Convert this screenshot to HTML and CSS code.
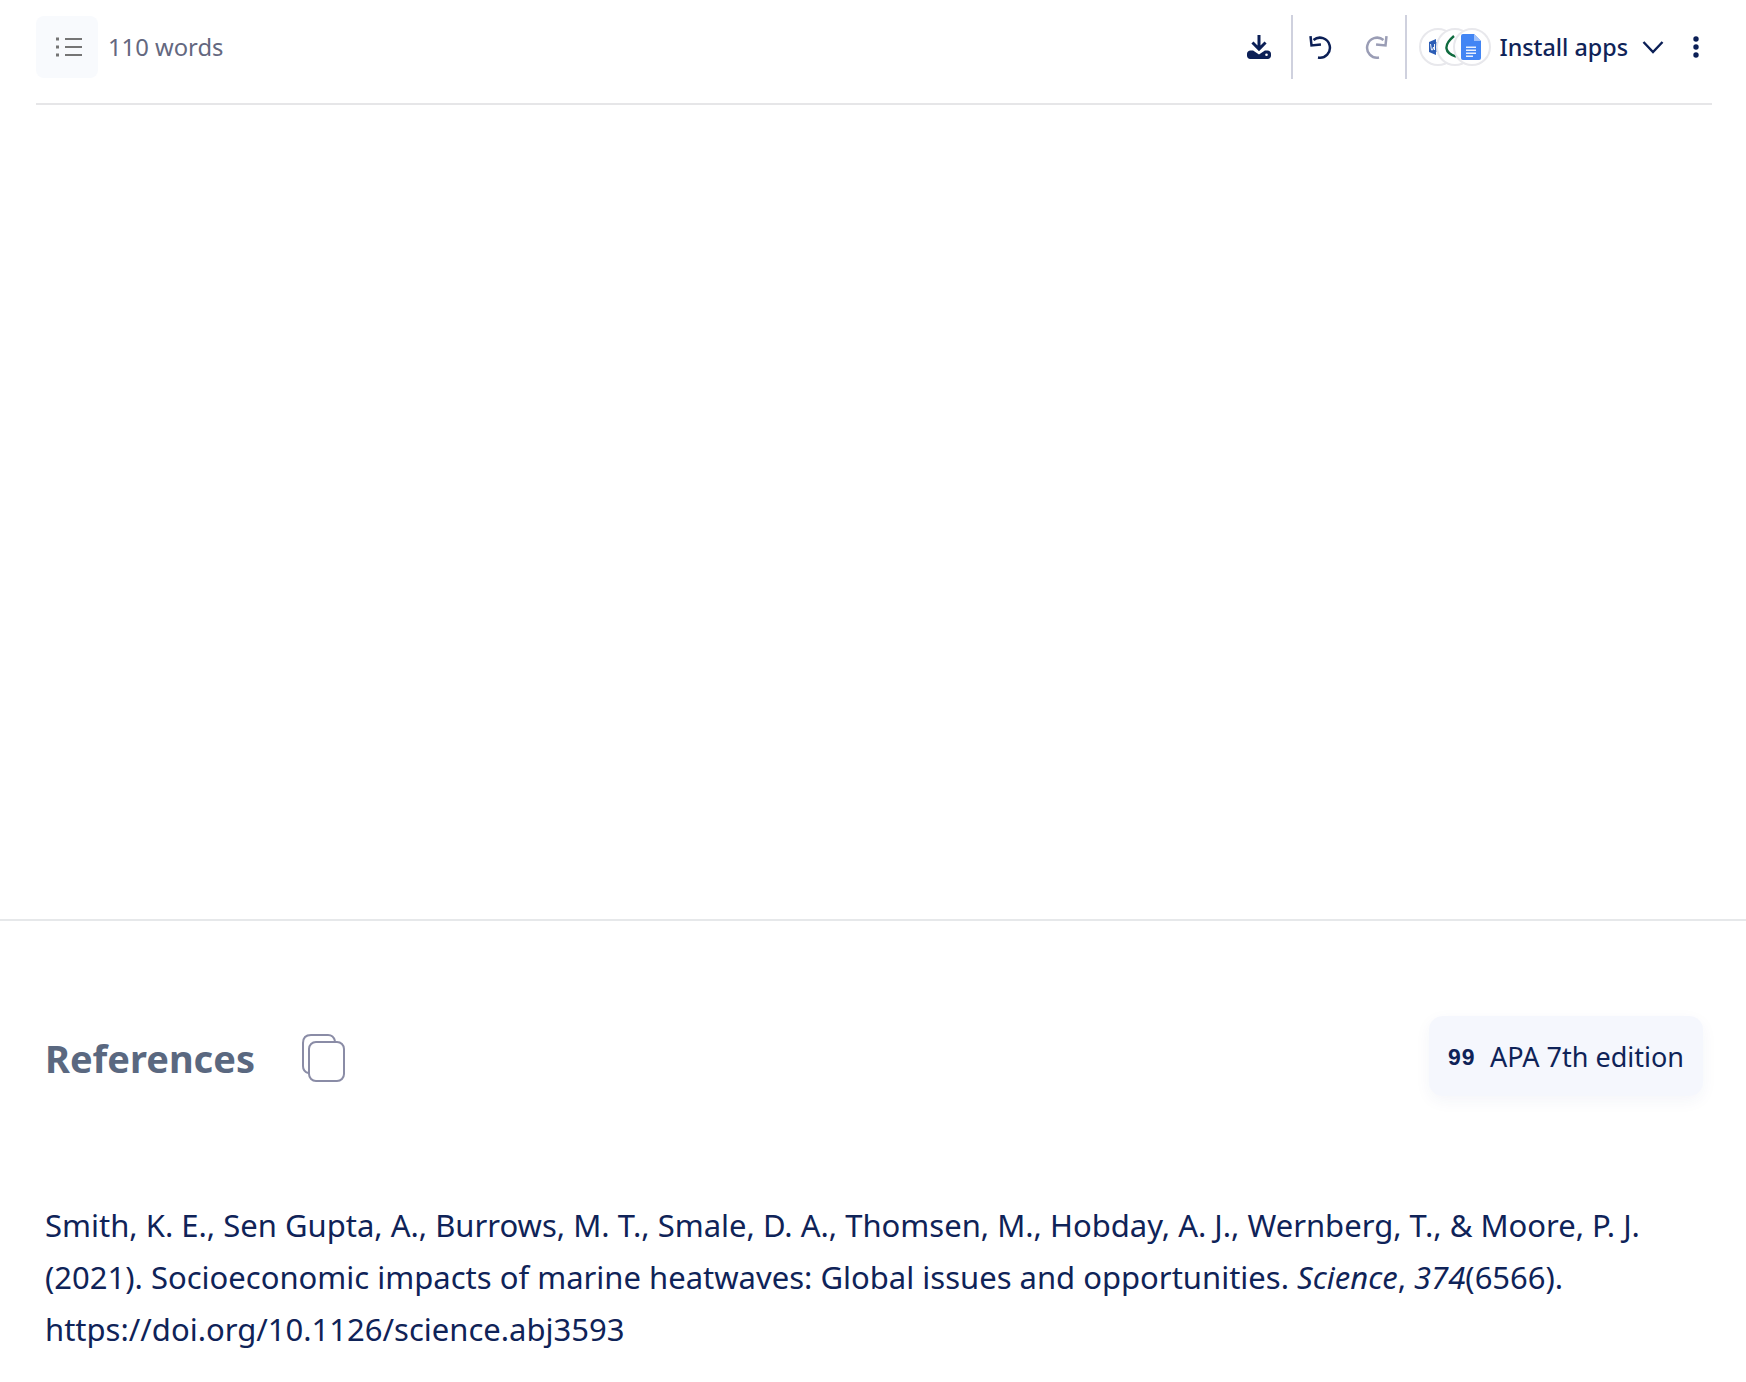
FILE: index.html
```html
<!DOCTYPE html>
<html lang="en">
<head>
<meta charset="utf-8">
<title>References</title>
<link rel="stylesheet" href="styles.css">
</head>
<body>
<div class="editor">
  <header class="toolbar">
    <button class="outline-btn" aria-label="Outline">
      <svg width="26" height="20" viewBox="0 0 26 20" fill="none" stroke="#757575" stroke-width="2.200"><path d="M9 2h17M9 10h17M9 18h17"/><path d="M0 2h3M0 10h3M0 18h3" stroke-width="3"/></svg>
    </button>
    <span class="count">110 words</span>
    <div class="spacer"></div>
    <div class="tool tool-download">
      <svg width="24" height="24" viewBox="0 0 24 24" fill="#0b1f56"><path d="M10.500 0h3v10.500l4-4 2.100 2.100-7.600 7.600-7.600-7.600 2.100-2.100 4 4z"/><path d="M3.500 15.500h2.600l5.900 4 5.900-4h2.600c2 0 3.500 1.500 3.500 3.200v2.100c0 1.800-1.500 3.200-3.200 3.200H3.200C1.500 24 0 22.600 0 20.800v-2.100c0-1.700 1.500-3.200 3.500-3.200z"/><circle cx="19.500" cy="19.800" r="1.300" fill="#fff"/></svg>
    </div>
    <div class="sep"></div>
    <div class="tool tool-undo">
      <svg width="24" height="24" viewBox="0 0 24 24" fill="none" stroke="#0b1f56" stroke-width="2.500"><path d="M5.500 5A10 10 0 1 1 10 22.500"/><path d="M3.500 1v9.500H13" transform="rotate(-6 3.500 10.500)"/></svg>
    </div>
    <div class="tool tool-redo">
      <svg width="24" height="24" viewBox="0 0 24 24" fill="none" stroke="#9a9db5" stroke-width="2.500"><path d="M18.500 5A10 10 0 1 0 14 22.500"/><path d="M20.500 1v9.500H11" transform="rotate(6 20.500 10.500)"/></svg>
    </div>
    <div class="sep"></div>
    <div class="apps">
      <span class="app-circle app-word"><svg width="10" height="16" viewBox="0 0 10 16"><path d="M0 3l7-3v16l-7-3z" fill="#2b5cb5"/><path d="M7 3h3v10H7z" fill="#5a8ad8"/><path d="M1.500 5l1 6h1l1-3 1 3V5" fill="none" stroke="#fff" stroke-width="0.900"/></svg></span>
      <span class="app-circle app-excel"><svg width="14" height="24" viewBox="0 0 14 24" fill="none" stroke="#0f6b3f" stroke-width="2.400"><path d="M9 1C3 6 1 10 1.500 13.500c.5 4 4.500 6.500 9.500 8"/></svg></span>
      <span class="app-circle app-docs"><svg width="20" height="26" viewBox="0 0 20 26"><path d="M2 0h11l7 7v17a2 2 0 0 1-2 2H2a2 2 0 0 1-2-2V2a2 2 0 0 1 2-2z" fill="#4285f4"/><path d="M13 0l7 7h-7z" fill="#a1c2fa"/><path d="M5 12.500h10V14H5zM5 15.500h10V17H5zM5 18.500h10V20H5zM5 21.500h7V23H5z" fill="#e8f0fe"/></svg></span>
    </div>
    <span class="install">Install apps</span>
    <svg class="chevron" width="22" height="14" viewBox="0 0 22 14" fill="none" stroke="#0b1f56" stroke-width="2.400"><path d="M1.500 2l9.500 10 9.500-10"/></svg>
    <svg class="kebab" width="6" height="22" viewBox="0 0 6 22" fill="#0b1f56"><circle cx="3" cy="3" r="2.700"/><circle cx="3" cy="11" r="2.700"/><circle cx="3" cy="19" r="2.700"/></svg>
  </header>
</div>
<section class="refs">
  <div class="refs-head">
    <h2 class="refs-title">References</h2>
    <svg class="copy" width="44" height="49" viewBox="0 0 44 49" fill="none" stroke="#8a8ca6" stroke-width="2"><path d="M7 40c-3-1-5-3-5-7V10c0-5 3-8 8-8h17c4 0 6 2 7 6"/><rect x="8" y="9" width="35" height="39" rx="7"/></svg>
    <div class="spacer"></div>
    <div class="style-btn"><span class="quote">99</span><span>APA 7th edition</span></div>
  </div>
  <p class="ref-item">Smith, K. E., Sen Gupta, A., Burrows, M. T., Smale, D. A., Thomsen, M., Hobday, A. J., Wernberg, T., &amp; Moore, P. J.<br>(2021). Socioeconomic impacts of marine heatwaves: Global issues and opportunities. <em>Science</em>, <em>374</em>(6566).<br>https://doi.org/10.1126/science.abj3593</p>
</section>
</body>
</html>
```
FILE: styles.css
```css
* { box-sizing: border-box; }
html, body { margin: 0; padding: 0; background: #fff; }
body { font-family: "Noto Sans", "Liberation Sans", sans-serif; color: #0f2358; width: 1746px; height: 1382px; overflow: hidden; }
.editor { height: 921px; border-bottom: 2px solid #e6e8ea; padding: 0 34px 0 36px; }
.toolbar { display: flex; align-items: center; height: 105px; border-bottom: 2px solid #e6e6e8; padding-bottom: 9px; }
.outline-btn { width: 62px; height: 62px; border: 0; padding: 0 0 0 4px; border-radius: 8px; background: #f8fafd; display: flex; align-items: center; justify-content: center; }
.count { margin-left: 10px; font-size: 23.800px; color: #64687f; }
.spacer { flex: 1; }
.tool { display: flex; align-items: center; justify-content: center; }
.tool-download { width: 24px; margin-right: 20px; }
.sep { width: 2px; height: 64px; background: #cfd1de; }
.tool-undo { width: 24px; margin-left: 15px; }
.tool-redo { width: 24px; margin-left: 33px; margin-right: 16px; }
.apps { display: flex; margin-left: 12px; }
.app-circle { width: 38px; height: 38px; flex: none; border-radius: 50%; border: 2px solid #e8e8ec; background: #fff; display: flex; align-items: center; margin-left: -21px; overflow: hidden; }
.app-circle:first-child { margin-left: 0; }
.app-word { padding-left: 8px; }
.app-excel { padding-left: 7px; }
.app-docs { justify-content: center; padding-right: 2px; }
.install { margin-left: 8px; font-size: 23.300px; font-weight: 500; }
.chevron { margin-left: 14px; }
.kebab { margin-left: 29px; margin-right: 13px; }
.refs { padding: 95px 43px 0 45px; }
.refs-head { display: flex; align-items: center; height: 80px; }
.refs-title { margin: 0; padding-top: 4px; font-size: 38px; font-weight: 700; color: #5a6880; }
.copy { margin-left: 46px; margin-top: 3px; }
.style-btn { display: flex; align-items: center; height: 80px; padding: 0 19px 0 18px; gap: 15px; background: #f5f7fd; border-radius: 14px; font-size: 27px; box-shadow: 0 5px 16px rgba(40, 60, 130, 0.05); }
.quote { padding-top: 5px; font-family: "Liberation Mono", monospace; font-weight: 700; font-size: 23px; }
.ref-item { margin: 103px 0 0; font-size: 31px; line-height: 52px; }
```
